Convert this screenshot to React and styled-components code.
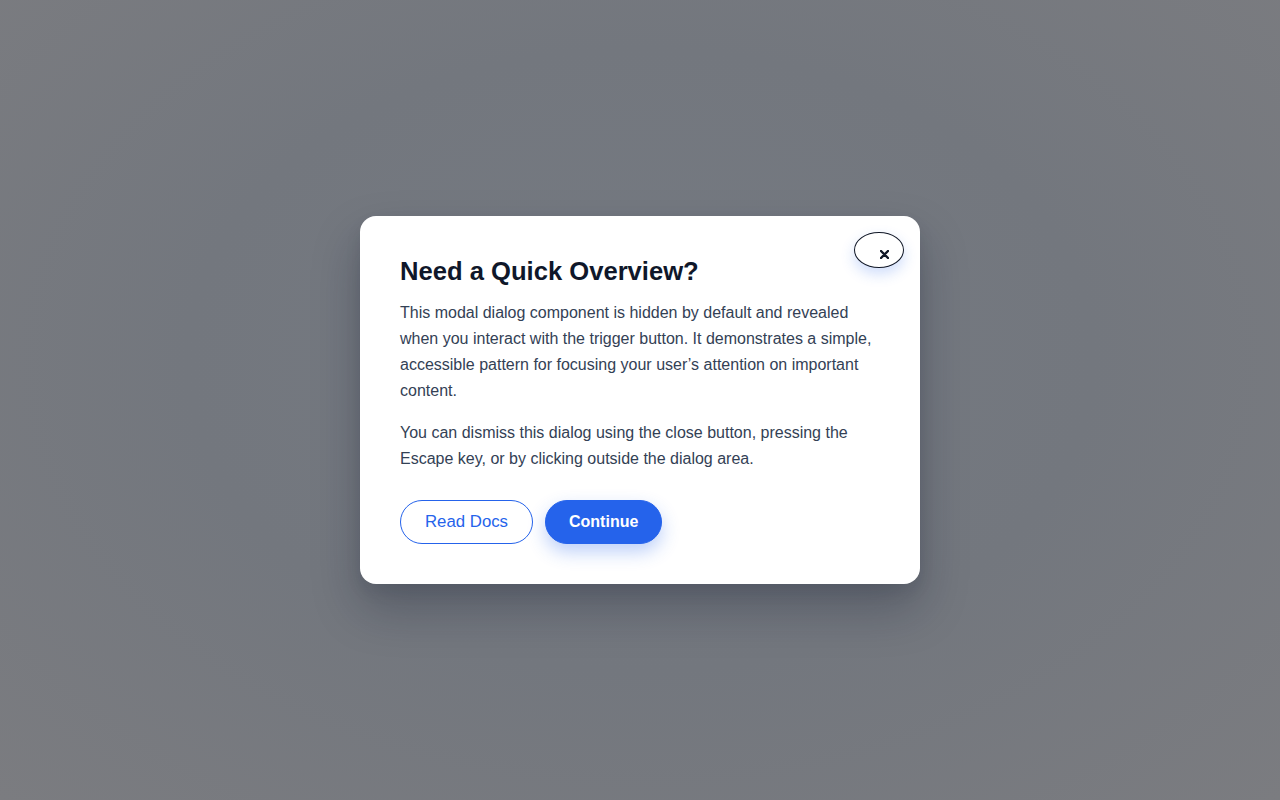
import React from "react";
import styled, { createGlobalStyle } from "styled-components";

const Global = createGlobalStyle`
  html, body { margin: 0; padding: 0; height: 100%; }
  body { font-family: "Liberation Sans", Arial, sans-serif; }
  #root { height: 100%; }
`;

const Overlay = styled.div`
  width: 1280px;
  height: 800px;
  background: radial-gradient(ellipse at 50% 45%, #757a82 0%, #73777e 50%, #7b7c80 100%);
  display: flex;
  align-items: center;
  justify-content: center;
`;

const Dialog = styled.div`
  position: relative;
  box-sizing: border-box;
  width: 560px;
  background: #ffffff;
  border-radius: 16px;
  padding: 40px;
  box-shadow: 0 24px 48px rgba(15, 23, 42, 0.28), 0 8px 16px rgba(15, 23, 42, 0.08);
`;

const CloseButton = styled.button`
  position: absolute;
  top: 16px;
  right: 16px;
  width: 50px;
  height: 36px;
  box-sizing: border-box;
  border: 1px solid #111827;
  border-radius: 50%;
  background: #fff;
  padding: 0 14px 8px 0;
  display: flex;
  align-items: flex-end;
  justify-content: flex-end;
  box-shadow: 0 6px 14px rgba(37, 99, 235, 0.22);
  cursor: pointer;
`;

const Title = styled.h2`
  margin: 0 0 14px;
  font-size: 25.6px;
  line-height: 30px;
  font-weight: 700;
  color: #0f172a;
`;

const Text = styled.p`
  margin: 0 0 16px;
  font-size: 16px;
  line-height: 26px;
  color: #334155;
`;

const Actions = styled.div`
  display: flex;
  gap: 12px;
  margin-top: 28px;
`;

const Button = styled.button`
  height: 44px;
  box-sizing: border-box;
  padding: ${(p) => (p.$primary ? "0 23px" : "0 24px")};
  border-radius: 22px;
  font-family: "Liberation Sans", Arial, sans-serif;
  font-size: ${(p) => (p.$primary ? "16px" : "16.8px")};
  cursor: pointer;
  border: 1px solid #2563eb;
  background: ${(p) => (p.$primary ? "#2563eb" : "#ffffff")};
  color: ${(p) => (p.$primary ? "#ffffff" : "#2563eb")};
  font-weight: ${(p) => (p.$primary ? 600 : 400)};
  box-shadow: ${(p) => (p.$primary ? "0 8px 18px rgba(37, 99, 235, 0.3)" : "none")};
`;

export default function App() {
  return (
    <>
      <Global />
      <Overlay>
        <Dialog role="dialog" aria-modal="true">
          <CloseButton aria-label="Close">
            <svg width="9" height="9" viewBox="0 0 9 9">
              <path d="M1 1 L8 8 M8 1 L1 8" stroke="#111827" strokeWidth="2.4" strokeLinecap="round" />
            </svg>
          </CloseButton>
          <Title>Need a Quick Overview?</Title>
          <Text>
            This modal dialog component is hidden by default and revealed when you interact with the
            trigger button. It demonstrates a simple, accessible pattern for focusing your user’s
            attention on important content.
          </Text>
          <Text>
            You can dismiss this dialog using the close button, pressing the Escape key, or by clicking
            outside the dialog area.
          </Text>
          <Actions>
            <Button>Read Docs</Button>
            <Button $primary>Continue</Button>
          </Actions>
        </Dialog>
      </Overlay>
    </>
  );
}
